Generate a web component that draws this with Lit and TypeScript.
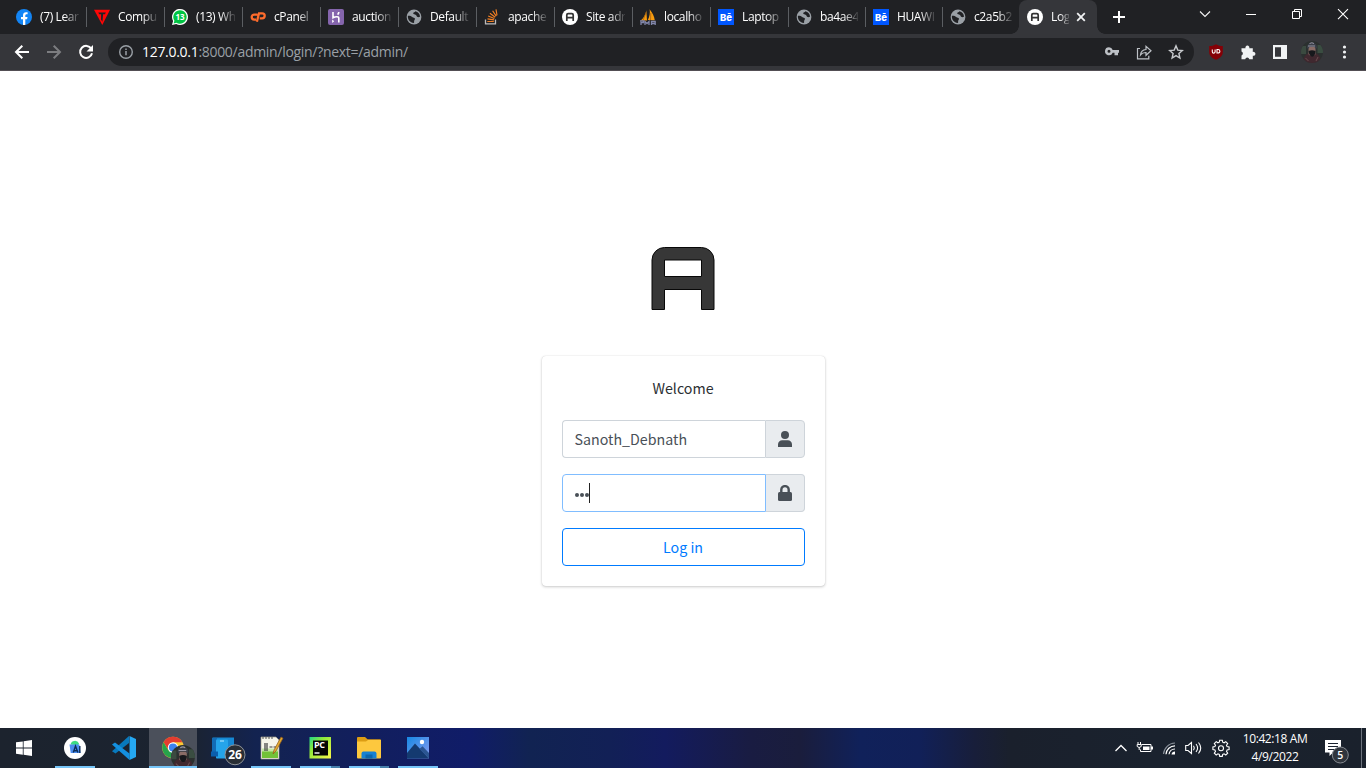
import { LitElement, html, svg, css, nothing } from "lit";
import { customElement, property } from "lit/decorators.js";

const globe = svg`<circle cx="8" cy="8" r="7.400" fill="#9aa0a6"/><path d="M1.900 6.800C3.400 6.600 5 6.800 6.200 8c1 1 2.300.6 2.700 1.500.4 1-.8 1.600-.8 2.700 0 .9.300 1.500-.5 1.700C4.200 13.800 1.500 10.800 1.900 6.800z" fill="#202124"/><path d="M9.300 2.200c0 1.200-2.400 1-2.100 2.400.3 1.100 1.700.6 2.700 1.300.9.700.7 1.900 1.800 2.200.9.200 1.600-.2 2.300-.3C14 4.900 12.200 2.700 9.300 2.200z" fill="#202124"/>`;
const adminLogo = svg`<circle cx="8" cy="8" r="8" fill="#fff"/><path d="M4.800 12V6a1.300 1.300 0 0 1 1.300-1.300h3.800A1.300 1.300 0 0 1 11.200 6v6M4.800 8.700h6.400" fill="none" stroke="#333" stroke-width="1.700"/>`;
const behance = svg`<rect width="16" height="16" fill="#0057ff"/><text x="8" y="11.600" text-anchor="middle" font-family="Inter" font-weight="800" font-size="9.500" fill="#fff">Bē</text>`;

const favicons: Record<string, unknown> = {
  facebook: svg`<circle cx="8" cy="8" r="8" fill="#1385f5"/><path d="M7 16V10.300H5V8h2V6.200C7 4.200 8.200 3.200 10 3.200l1.600.1v2h-1C9.600 5.300 9.300 5.900 9.300 6.600V8h2.200l-.4 2.300H9.300V16z" fill="#fff"/>`,
  tri: svg`<path d="M0 .8H16L8.300 16z" fill="#fd0606"/><path d="M4.300 3.500h7.500L11 5.300H9.100L8.400 12.800 7 10.500 7.100 5.300H5.200z" fill="#202124"/>`,
  whatsapp: svg`<path d="M0 16l1.100-4A8 8 0 1 1 4.200 15z" fill="#fff"/><path d="M1.600 14.500l.8-2.800A6.700 6.700 0 1 1 4.500 13.700z" fill="#00c443"/><text x="8" y="11.200" text-anchor="middle" font-family="Open Sans" font-weight="700" font-size="8" fill="#fff">13</text>`,
  cpanel: svg`<path d="M7.500 5.600H4.200a2.500 2.500 0 0 0 0 5H6M6.900 12.700L9 4.300h3.200a2.500 2.500 0 0 1 0 5H9.700" fill="none" stroke="#ff6c2c" stroke-width="2.300"/>`,
  heroku: svg`<rect width="16" height="16" rx="2" fill="#8565ad"/><path d="M5 3v5.800C7 7.800 10.800 6.900 10.800 9.200V13.500M10.800 3c0 1.200-.6 2-1.200 2.600" fill="none" stroke="#fff" stroke-width="1.600"/><path d="M4.200 10.500l2 1.700-2 1.700z" fill="#fff"/>`,
  globe,
  stack: svg`<path d="M1.500 10.500v4.300h10v-4.300" fill="none" stroke="#bcbbbb" stroke-width="1.300"/><path d="M3.300 12.500h6.500M3.500 9.900l6.500 1M4.200 7l6.200 2.500M5.900 4.200l5.300 4M8.600 1.800l3.600 5.300M12 .3l1 6" stroke="#f48024" stroke-width="1.150"/>`,
  admin: adminLogo,
  pma: svg`<path d="M.5 11.500C3.500 9.500 5.800 5 6.300 1.200L7 11.500zM7.800 11C9.500 8 10.300 4 9.600.3 12.500 4 14.200 7 14.800 11.200z" fill="#f89c0e"/><path d="M3 11.500L6.300 3M10.500 11l.3-7" stroke="#9a5a16" stroke-width=".7"/><path d="M0 12h3.500v1.600H1V16M5 16v-3.500l2 2 2-2V16M11.500 16v-3.500h3.700V16M11.500 14.500h3.500" fill="none" stroke="#8186aa" stroke-width="1.300"/>`,
  behance,
};

@customElement("browser-tab")
class BrowserTab extends LitElement {
  @property() icon = "globe";
  @property() label = "";
  @property({ type: Boolean, reflect: true }) active = false;
  @property({ type: Boolean, reflect: true }) first = false;
  @property({ type: Boolean, reflect: true }) narrow = false;
  static styles = css`
    :host { position: relative; display: flex; align-items: center; box-sizing: border-box; width: 78px; height: 34px; flex: none; color: #fff; }
    :host([narrow]) { width: 77px; }
    .sep { width: 1px; height: 20px; background: #5b5e62; flex: none; margin-right: 7px; }
    :host([first]) .sep, :host([active]) .sep { background: none; }
    .fav { flex: none; width: 16px; height: 16px; margin-right: 8px; overflow: visible; }
    .label { flex: 1; min-width: 0; white-space: nowrap; height: 18px; font: 12px/18px "Open Sans", sans-serif; letter-spacing: -.38px; margin-right: 7px; -webkit-mask-image: linear-gradient(90deg, #000 calc(100% - 15px), rgba(0,0,0,.12)); mask-image: linear-gradient(90deg, #000 calc(100% - 15px), rgba(0,0,0,.12)); }
    :host([active]) { background: #35363a; border-radius: 8px 8px 0 0; }
    :host([active]) .label { flex: none; width: 18px; margin-right: 7px; -webkit-mask-image: linear-gradient(90deg, #000 9px, transparent 20px); mask-image: linear-gradient(90deg, #000 9px, transparent 20px); }
    .close { width: 10px; height: 10px; flex: none; }
    .flare { position: absolute; bottom: 0; width: 8px; height: 8px; }
    .left { left: -8px; background: radial-gradient(circle at 0 0, transparent 7.500px, #35363a 8px); }
    .right { right: -8px; background: radial-gradient(circle at 100% 0, transparent 7.500px, #35363a 8px); }
  `;
  render() {
    return html`<i class="sep"></i><svg class="fav" viewBox="0 0 16 16">${favicons[this.icon]}</svg>
      <span class="label">${this.label}</span>
      ${this.active
        ? html`<svg class="close" viewBox="0 0 10 10"><path d="M1.200 1.200l7.600 7.600M8.800 1.200L1.200 8.800" stroke="#f1f3f4" stroke-width="1.800"/></svg><i class="flare left"></i><i class="flare right"></i>`
        : nothing}`;
  }
}

const portrait = svg`<clipPath id="face"><circle cx="11" cy="11" r="11"/></clipPath><g clip-path="url(#face)"><rect width="22" height="22" fill="#2b302f"/><path d="M0 5h5v8H0z" fill="#3b4a40"/><path d="M16.500 4H22v8h-5.500z" fill="#3a4d41"/><path d="M2 22c0-7 3-10 9-10s9 3 9 10z" fill="#40282f"/><path d="M7.500 6h7v7c0 2-7 2-7 0z" fill="#8a6c66"/><path d="M6 6.500c0-6.500 10-6.500 10 0L15 8l-1.500-2h-5L7 8z" fill="#3a3f49"/><path d="M7.500 10c2-1 5-1 7 0 0 7-6 8-7 0z" fill="#17181c"/><path d="M8.500 2.500q2.500-1.500 4.500 0M7 5h7" fill="none" stroke="#9795a2"/><path d="M4.500 17l3 3M17 16l-2 4" stroke="#6b4c50"/></g>`;

@customElement("browser-chrome")
class BrowserChrome extends LitElement {
  static styles = css`
    :host { display: block; height: 71px; background: #202124; }
    .tabs { display: flex; height: 34px; padding-left: 8px; }
    .plus { width: 14px; height: 14px; margin: 10px 0 0 15px; }
    .win { margin-left: auto; display: flex; height: 28px; align-items: center; }
    .win svg { width: 46px; height: 28px; }
    .bar { box-sizing: border-box; height: 37px; background: #35363a; border-bottom: 1px solid #524e53; display: flex; align-items: center; padding: 0 10px 0 14px; }
    .nav { width: 16px; height: 16px; margin-right: 16px; flex: none; }
    .nav:nth-child(3) { margin-right: 14px; }
    .omni { display: flex; align-items: center; flex: none; box-sizing: border-box; width: 1086px; height: 28px; background: #202124; border-radius: 14px; padding: 0 10px 0 10px; }
    .omni svg { width: 16px; height: 16px; margin-left: 16px; }
    .omni .info { margin: 0 8px 0 0; }
    .url { color: #9aa0a6; font: 14px/20px "Open Sans", sans-serif; letter-spacing: -.3px; margin-right: auto; }
    .url b { color: #fff; font-weight: 400; }
    .ext { display: flex; align-items: center; margin-left: 14px; }
    .ext svg { width: 16px; height: 16px; margin-right: 16px; }
    .ext .me { width: 22px; height: 22px; margin: 0 13px 0 -3px; }
    .ext .dots { margin: 0; }
  `;
  tabs = [
    ["facebook", "(7) Lear"], ["tri", "Compu"], ["whatsapp", "(13) Wh"], ["cpanel", "cPanel"],
    ["heroku", "auction"], ["globe", "Default"], ["stack", "apache"], ["admin", "Site adr"],
    ["pma", "localho"], ["behance", "Laptop"], ["globe", "ba4ae4"], ["behance", "HUAWI"], ["globe", "c2a5b2"],
  ];
  render() {
    return html`
      <div class="tabs">
        ${this.tabs.map(([i, t], n) => html`<browser-tab icon=${i} label=${t} ?first=${n === 0} ?narrow=${n > 9}></browser-tab>`)}
        <browser-tab icon="admin" label="Log" active></browser-tab>
        <svg class="plus" viewBox="0 0 14 14"><path d="M7 1v12M1 7h12" stroke="#fff" stroke-width="2"/></svg>
        <div class="win">
          <svg viewBox="0 0 46 28"><path d="M18 11.500l5 5 5-5" fill="none" stroke="#f4f4f4" stroke-width="1.100"/></svg>
          <svg viewBox="0 0 46 28"><path d="M18 14.500h10" stroke="#fff"/></svg>
          <svg viewBox="0 0 46 28"><path d="M18.500 11.500h7v7h-7zM20.500 11.500v-2h7v7h-2" fill="none" stroke="#fff"/></svg>
          <svg viewBox="0 0 46 28"><path d="M18 9.200l10 10M28 9.200l-10 10" stroke="#fff" stroke-width="1.100"/></svg>
        </div>
      </div>
      <div class="bar">
        <svg class="nav" viewBox="0 0 16 16"><path d="M15 8H2.500M8.300 1.700L2 8l6.300 6.300" fill="none" stroke="#fff" stroke-width="2"/></svg>
        <svg class="nav" viewBox="0 0 16 16"><path d="M1 8h12.500M7.700 1.700L14 8l-6.300 6.300" fill="none" stroke="#7c7d80" stroke-width="2"/></svg>
        <svg class="nav" viewBox="0 0 16 16"><path d="M13.300 4.800A6 6 0 1 0 14 9.200" fill="none" stroke="#fff" stroke-width="2"/><path d="M15 1v6.500H8.500z" fill="#fff"/></svg>
        <div class="omni">
          <svg class="info" viewBox="0 0 16 16"><circle cx="8" cy="8" r="6.300" fill="none" stroke="#9aa0a6" stroke-width="1.400"/><path d="M8 7v4.300M8 4.500V6" stroke="#9aa0a6" stroke-width="1.500"/></svg>
          <span class="url"><b>127.0.0.1</b>:8000/admin/login/?next=/admin/</span>
          <svg viewBox="0 0 16 16"><path d="M5 3.300a4 4 0 1 0 3.700 5.500H10.500v2.500H14V8.800h1V6H8.700A4 4 0 0 0 5 3.300zM5 5.800A1.500 1.500 0 1 1 5 8.800 1.500 1.500 0 0 1 5 5.800z" fill="#bdc1c6" fill-rule="evenodd"/></svg>
          <svg viewBox="0 0 16 16"><path d="M4 4.500H1.500v10.300h11.300v-3M4.500 11c.3-3.500 2.200-5.300 5.500-5.500V2.300L15 6.800l-5 4.500V8.500C7.500 8.400 5.800 9.300 4.500 11z" fill="none" stroke="#bdc1c6" stroke-width="1.200"/></svg>
          <svg viewBox="0 0 16 16"><path d="M8 1.900l1.800 4.200 4.500.4-3.400 3 1 4.500L8 11.600 4.100 14l1-4.500-3.400-3 4.500-.4z" fill="none" stroke="#c7cacd" stroke-width="1.400"/></svg>
        </div>
        <div class="ext">
          <svg viewBox="0 0 16 16"><path d="M8 .2C6 1.500 3.500 2 1.200 2v6c0 4 3 6.400 6.800 7.800 3.800-1.400 6.800-3.800 6.800-7.800V2C12.500 2 10 1.500 8 .2z" fill="#850006"/><path d="M4.300 5.500v2.200a1.400 1.400 0 0 0 2.800 0V5.500M9 5.500v3.500h1.100a1.750 1.750 0 0 0 0-3.500z" fill="none" stroke="#fff" stroke-width="1.100"/></svg>
          <svg viewBox="0 0 16 16"><path d="M1.500 4.200h4a2 2 0 1 1 3.800 0h3.500v3.700a2 2 0 1 1 0 3.800v3.500H9.300a2.100 2.100 0 0 0-4.100 0H1.500v-3.800a2 2 0 0 0 0-3.800z" fill="#f1f3f4"/></svg>
          <svg viewBox="0 0 16 16"><path d="M1 1h14v14H1zM3 3.200v9.600h6V3.200z" fill="#f1f3f4" fill-rule="evenodd"/></svg>
          <svg class="me" viewBox="0 0 22 22">${portrait}</svg>
          <svg class="dots" viewBox="0 0 16 16"><circle cx="8.500" cy="3" r="1.600" fill="#f1f3f4"/><circle cx="8.500" cy="8" r="1.600" fill="#f1f3f4"/><circle cx="8.500" cy="13" r="1.600" fill="#f1f3f4"/></svg>
        </div>
      </div>`;
  }
}

@customElement("login-page")
class LoginPage extends LitElement {
  static styles = css`
    :host { display: flex; flex-direction: column; align-items: center; flex: 1; background: #fff; font-family: "Noto Sans CJK SC", "Noto Sans", sans-serif; font-size: 14.250px; line-height: 24px; }
    .logo { width: 64px; height: 64px; margin-top: 176px; }
    .card { box-sizing: border-box; width: 283px; height: 230px; margin: 45px 0 0 1px; padding: 20px; border-radius: 4px; box-shadow: 0 0 1px rgba(0,0,0,.18), 0 1px 3px rgba(0,0,0,.2); }
    .title { text-align: center; color: #2b2f33; height: 24px; margin: 0 1px 20px 0; }
    .group { display: flex; height: 38px; margin-bottom: 16px; width: 243px; }
    .input { box-sizing: border-box; flex: 1; display: flex; align-items: center; border: 1px solid #ced4da; border-right: 0; border-radius: 4px 0 0 4px; padding: 0 12px 0 11.500px; color: #495057; }
    .addon { box-sizing: border-box; width: 40px; display: flex; align-items: center; justify-content: center; border: 1px solid #ced4da; border-radius: 0 4px 4px 0; background: #e9ecef; padding-right: 1px; }
    .focus { border: 1px solid #80bdff; padding-left: 12px; }
    .focus + .addon { width: 39px; border-left: 0; }
    .dot { width: 4px; height: 4px; border-radius: 50%; background: #495057; margin: 3px 1px 0 0; }
    .caret { width: 1px; height: 20px; background: #222; margin-left: -1px; }
    .btn { box-sizing: border-box; width: 243px; height: 38px; display: flex; align-items: center; justify-content: center; padding-right: 1px; border: 1px solid #007bff; border-radius: 4px; color: #007bff; }
    .addon svg { width: 16px; height: 16px; }
  `;
  render() {
    return html`
      <svg class="logo" viewBox="0 0 64 64"><path d="M1 62.500V13A12.500 12.500 0 0 1 13.500.500H50.500A12.500 12.500 0 0 1 63 13V62.500H50.500V42.500H13.500V62.500zM13.500 13V29.500H50.500V13z" fill="#373737" fill-rule="evenodd" stroke="#080808"/></svg>
      <div class="card">
        <div class="title">Welcome</div>
        <div class="group"><div class="input">Sanoth_Debnath</div><div class="addon"><svg viewBox="0 0 16 16"><circle cx="8" cy="4" r="4" fill="#495057"/><path d="M1 16v-2.500A4.200 4.200 0 0 1 5.200 9.300h5.600A4.200 4.200 0 0 1 15 13.500V16z" fill="#495057"/></svg></div></div>
        <div class="group"><div class="input focus"><i class="dot"></i><i class="dot"></i><i class="dot"></i><i class="caret"></i></div><div class="addon"><svg viewBox="0 0 16 16"><rect x="1" y="7" width="14" height="9" rx="1.500" fill="#495057"/><path d="M4.300 8V4.800a3.700 3.700 0 0 1 7.400 0V8" fill="none" stroke="#495057" stroke-width="2.400"/></svg></div></div>
        <div class="btn">Log in</div>
      </div>`;
  }
}

const apps = [
  { line: "start", icon: svg`<path d="M4 6.300l6.800-.9v6.200H4zM11.600 5.300L20 4v7.600h-8.400zM4 12.400h6.800v6.300L4 17.800zM11.600 12.400H20V20l-8.400-1.200z" fill="#fff"/>` },
  { line: "full", icon: svg`<circle cx="12" cy="12" r="11" fill="#fff"/><path d="M7.500 8.500a4.500 4.500 0 0 1 8.500-1l-1 2z" fill="#3ddc84"/><path d="M6.500 8.500h9.800l1.200 8.500H7.700z" fill="#4b8df0"/><path d="M10.300 16.500l2.200-6.500 2.400 6.500M11 14.700h3M16.800 10v7" fill="none" stroke="#0b2d57" stroke-width="1.400"/>` },
  { line: "", icon: svg`<path d="M17 0v7L3.500 17.500 0 15.200z" fill="#0879bd"/><path d="M0 8.500L3 6.500 17.500 17.500V24z" fill="#1490df"/><path d="M17.500 0L24 3v18l-6.500 3z" fill="#25a8f2"/>` },
  { line: "wide", icon: svg`<circle cx="12" cy="11.500" r="10.800" fill="#fcc934"/><path d="M2.600 6.200A10.800 10.800 0 0 1 21.400 6.200H12L7.300 14z" fill="#e43d30"/><path d="M2.600 6.200a10.800 10.800 0 0 0 9.400 16.100l4.700-8-4.700 1.900-4.700-2z" fill="#26a34b"/><circle cx="12" cy="11.500" r="5.200" fill="#fff"/><circle cx="12" cy="11.500" r="4.100" fill="#3c82ef"/><svg x="10" y="9" width="16.500" height="16.500" viewBox="0 0 22 22">${portrait}</svg>` },
  { line: "", icon: svg`<path d="M2.500 1.500H24v14H2.500z" fill="#1688d4"/><path d="M2 2h5v14H2z" fill="#126bb5"/><rect x="6" y="3.500" width="12" height="19" rx=".8" fill="#25a4ea"/><path d="M10 5h4" stroke="#b9eaff"/><path d="M1 15.500h7v5H1z" fill="#0b5eac"/><circle cx="25" cy="18.800" r="10" fill="#292e35" stroke="#8e9298"/><text x="25" y="23.100" text-anchor="middle" font-family="Open Sans" font-size="12" font-weight="700" fill="#fff">26</text>` },
  { line: "full", icon: svg`<path d="M2 1h15l3 3v19H2z" fill="#f6f5ea" stroke="#9d9b88" stroke-width=".7"/><path d="M3 13h16v9H3z" fill="#72c238"/><path d="M3 12.500h16v3H3z" fill="#c4e7a6"/><path d="M6 7v8M8 7v8M10.500 11h3M14.500 11h3" stroke="#3b3b3b" stroke-width="1.200"/><path d="M14 18l1-4 7-13 2 1.200-7 12.800z" fill="#e3aa30" stroke="#8f591a" stroke-width=".7"/><path d="M4 1v2M7 1v2M10 1v2M13 1v2" stroke="#555"/>` },
  { line: "split", icon: svg`<linearGradient id="pc" x2="1" y2="1"><stop stop-color="#21d789"/><stop offset=".35" stop-color="#8ee83b"/><stop offset="1" stop-color="#fcf84a"/></linearGradient><rect x="1.500" y="1" width="21.500" height="21.500" fill="url(#pc)"/><rect x="5" y="4.500" width="15" height="15" fill="#050505"/><text x="6" y="12.300" font-family="Open Sans" font-size="9" font-weight="700" fill="#fff" textLength="11">PC</text><path d="M6.500 17h5" stroke="#fff" stroke-width="1.400"/>` },
  { line: "split", icon: svg`<path d="M0 2a1 1 0 0 1 1-1h7l2.500 2.300H23a1 1 0 0 1 1 1V7H0z" fill="#dc9d13"/><path d="M0 5.500h9l2-1.500h13v17.500a1 1 0 0 1-1 1H1a1 1 0 0 1-1-1z" fill="#fdc83e"/><path d="M4.500 22.500v-5a2 2 0 0 1 2-2h11a2 2 0 0 1 2 2v5z" fill="#1681d3"/><path d="M8.500 18.500h7v4h-7z" fill="#0c65aa"/>` },
  { line: "full", icon: svg`<linearGradient id="ph" x2="1" y2="1"><stop stop-color="#1688e4"/><stop offset="1" stop-color="#8b9cf0"/></linearGradient><rect x="1" y="1" width="22" height="21.500" fill="url(#ph)"/><path d="M1 17L9 7.500l14 15H1z" fill="#143a70"/><path d="M13.500 13l3-2.700L23 17v5.500z" fill="#2b5591"/><circle cx="16" cy="6" r="2.200" fill="#fff"/>` },
];

@customElement("task-bar")
class TaskBar extends LitElement {
  static styles = css`
    :host { display: flex; height: 40px; color: #fff; background: linear-gradient(90deg, #1c232e 0, #1b2330 190px, #132350 255px, #121f5c 350px, #101c68 470px, #112352 530px, #122056 610px, #131b5e 665px, #191c42 750px, #1a1d3c 800px, #10215a 860px, #112058 920px, #181e3a 975px, #1a202c 1010px, #1a222e 1150px, #1a212c 100%); }
    .app { position: relative; width: 49px; height: 40px; display: flex; justify-content: center; align-items: center; flex: none; }
    .app.start { box-sizing: border-box; width: 50px; padding-right: 2px; }
    .app svg { width: 24px; height: 24px; overflow: visible; }
    .app.wide { background: #4b505b; width: 48px; margin-left: 1px; }
    .app.full::after, .app.split::after, .app.wide::after { content: ""; position: absolute; bottom: 0; left: 5px; width: 40px; height: 2px; background: #76c5f8; }
    .app.wide::after { left: 0; width: 48px; }
    .app.split::after { background: linear-gradient(90deg, #76c5f8 31px, #4780ab 31px); }
    .apps { display: flex; }
    .tray { display: flex; margin-left: auto; align-items: center; }
    .tray svg { width: 16px; height: 16px; margin-right: 8px; overflow: visible; }
    .tray .gear { margin: 0 0 0 4px; }
    .clock { width: 76px; text-align: center; font: 12px/18px "Open Sans", sans-serif; letter-spacing: -.4px; margin: 0 12px 0 8px; white-space: nowrap; }
    .tray .note { width: 24px; height: 24px; margin: 0 12px 0 0; }
    .peek { width: 4px; height: 40px; border-left: 1px solid #6c727c; }
  `;
  render() {
    return html`
      <div class="apps">${apps.map((a) => html`<div class="app ${a.line}"><svg viewBox="0 0 24 24">${a.icon}</svg></div>`)}</div>
      <div class="tray">
        <svg viewBox="0 0 16 16"><path d="M2.500 11L8 5.500l5.500 5.500" fill="none" stroke="#fff" stroke-width="1.300"/></svg>
        <svg viewBox="0 0 16 16"><path d="M4.500 4.500H14v7H3.500V9.500" fill="none" stroke="#fff"/><path d="M6 6.500h6.500v3.500H6zM14 6.500h2v3h-2z" fill="#fff"/><path d="M1 2v2M3.500 2v2M.2 4.500h4v2q-2 2-4 0zM2.200 7v3" fill="none" stroke="#fff"/></svg>
        <svg viewBox="0 0 16 16"><path d="M2.500 14A12 12 0 0 1 14 3" fill="none" stroke="#888f99" stroke-width="1.200"/><path d="M5 14.300a9 9 0 0 1 9-8.500M8 14.300A6 6 0 0 1 14 9" fill="none" stroke="#fff" stroke-width="1.200"/><path d="M10.500 14.500a3.500 3.500 0 0 1 3.500-3v3z" fill="#fff"/></svg>
        <svg viewBox="0 0 16 16"><path d="M.7 5.500H3l3.500-3v11L3 10.500H.7zM8.500 5.800q1.600 2.200 0 4.400M11 4q3.200 4 0 8M13.500 2.500q4.500 5.500 0 11" fill="none" stroke="#fff" stroke-width="1.100"/></svg>
        <svg class="gear" viewBox="0 0 16 16"><path d="M6.700.6h2.600l.4 2 1.400.6 1.700-1.200 1.900 1.900-1.200 1.700.6 1.400 2 .4v2.600l-2 .4-.6 1.400 1.200 1.700-1.900 1.900-1.700-1.200-1.400.6-.4 2H6.700l-.4-2-1.400-.6-1.700 1.200-1.900-1.900 1.200-1.700-.6-1.400-2-.4V7.400l2-.4.6-1.400L1.300 3.900 3.200 2l1.700 1.200 1.400-.6z" transform="translate(0 -.4)" fill="none" stroke="#fff" stroke-width="1.100"/><circle cx="8" cy="8.300" r="2.500" fill="none" stroke="#fff" stroke-width="1.100"/></svg>
        <div class="clock">10:42:18 AM<br>4/9/2022</div>
        <svg class="note" viewBox="0 0 24 24"><path d="M0 4h16v12.500H8L4.500 20v-3.500H0z" fill="#fff"/><path d="M3 7.500h10M3 10.500h10M3 13.500h7" stroke="#1a2230"/><circle cx="15.300" cy="19" r="8" fill="#30353d" stroke="#858a91"/><text x="15.300" y="22.800" text-anchor="middle" font-family="Open Sans" font-size="10.500" font-weight="600" fill="#fff">5</text></svg>
        <i class="peek"></i>
      </div>`;
  }
}

@customElement("app-root")
class AppRoot extends LitElement {
  static styles = css`
    :host { display: flex; flex-direction: column; width: 1366px; height: 768px; overflow: hidden; }
  `;
  render() {
    return html`<browser-chrome></browser-chrome><login-page></login-page><task-bar></task-bar>`;
  }
}
